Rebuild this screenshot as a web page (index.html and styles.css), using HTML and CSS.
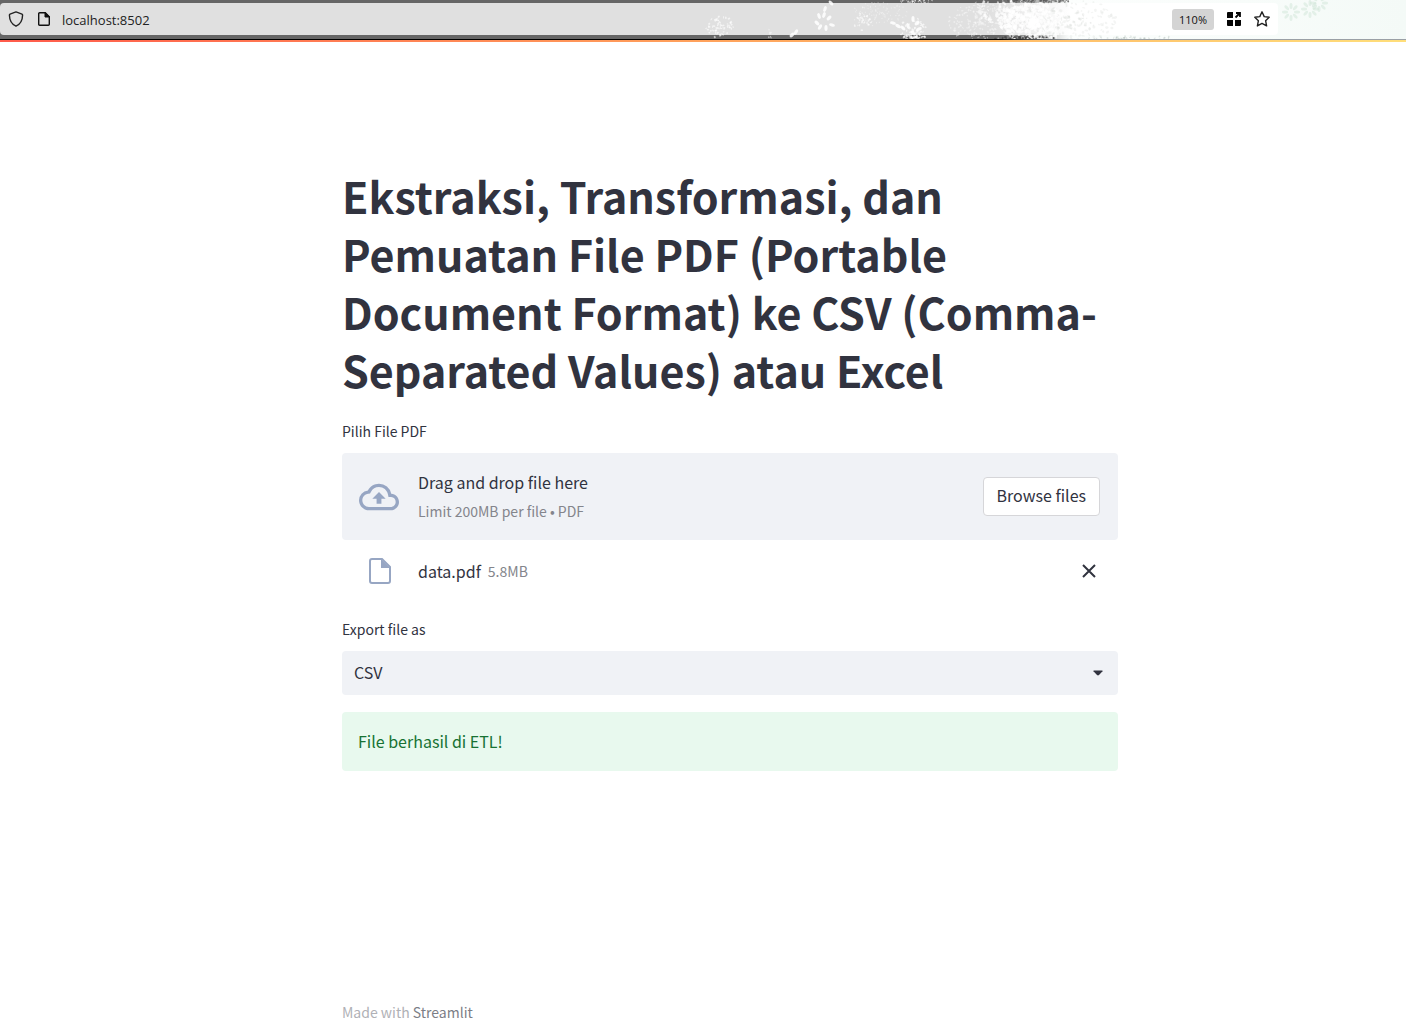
FILE: index.html
```html
<!DOCTYPE html>
<html lang="id">
<head>
<meta charset="utf-8">
<title>Ekstraksi, Transformasi, dan Pemuatan File PDF</title>
<link rel="stylesheet" href="styles.css">
</head>
<body>
<header class="toolbar">
  <form class="address">
    <svg class="icon" viewBox="0 0 16 16" aria-hidden="true"><path d="M8 .9 14 3.1q.6.3.6 1C14.500 9.500 12 13.500 8 15.200 4 13.500 1.500 9.500 1.400 4.100q0-.7.6-1z" fill="none" stroke="#222" stroke-width="1.400" stroke-linejoin="round"/></svg>
    <svg class="icon" viewBox="0 0 16 16" aria-hidden="true"><path d="M3.700 1.700h5.600l4 4v7.600q0 1-1 1H3.700q-1 0-1-1V2.700q0-1 1-1z" fill="none" stroke="#111" stroke-width="1.400"/><path d="M9 1.500V6h4.500z" fill="#111" stroke="#111"/></svg>
    <input class="url" type="text" aria-label="Alamat" value="localhost:8502">
    <button class="zoom" type="button">110%</button>
    <button class="tool" type="button" aria-label="Ekstensi"><svg class="icon" viewBox="0 0 16 16"><path d="M2 1h5v6H1V2q0-1 1-1zM1 9h6v6H2q-1 0-1-1zM9 9h6v5q0 1-1 1H9z" fill="#050505"/><path d="M10 2h4v4M14 2 9.500 6.500" fill="none" stroke="#050505" stroke-width="1.800"/></svg></button>
    <button class="tool" type="button" aria-label="Markah"><svg class="icon" viewBox="0 0 16 16"><path d="m8 .8 2.200 4.800 5 .6-3.600 3.500 1 5.200L8 12.400l-4.600 2.500 1-5.200L.8 6.200l5-.6z" fill="none" stroke="#222" stroke-width="1.400" stroke-linejoin="round"/></svg></button>
  </form>
  <svg class="snow" width="1406" height="40" aria-hidden="true"></svg>
</header>
<div class="decoration"></div>
<main class="page">
  <h1 class="title">Ekstraksi, Transformasi, dan Pemuatan File PDF (Portable Document Format) ke CSV (Comma-Separated Values) atau Excel</h1>
  <label class="label" for="browse">Pilih File PDF</label>
  <section class="dropzone">
    <svg class="cloud" viewBox="0 0 24 24" aria-hidden="true"><path d="M19.350 10.040A7.490 7.490 0 0 0 12 4C9.110 4 6.600 5.640 5.350 8.040A5.994 5.994 0 0 0 0 14c0 3.310 2.690 6 6 6h13c2.760 0 5-2.240 5-5 0-2.640-2.050-4.780-4.650-4.960zM19 18H6c-2.210 0-4-1.790-4-4 0-2.050 1.530-3.760 3.560-3.970l1.070-.11.5-.95A5.469 5.469 0 0 1 12 6c2.620 0 4.880 1.860 5.390 4.430l.3 1.500 1.530.11A2.980 2.980 0 0 1 22 15c0 1.650-1.350 3-3 3zM8 13h2.550v3h2.900v-3H16l-4-4z" fill="#97a6c3"/></svg>
    <div class="instructions"><span>Drag and drop file here</span><small class="hint">Limit 200MB per file • PDF</small></div>
    <button class="browse" id="browse" type="button">Browse files</button>
  </section>
  <div class="file">
    <svg class="doc" viewBox="0 0 22 26" aria-hidden="true"><path d="M3 1h10l8 8v14q0 2-2 2H3q-2 0-2-2V3q0-2 2-2z" fill="none" stroke="#97a6c3" stroke-width="2"/><path d="M12 1v9h9z" fill="#97a6c3"/></svg>
    <span>data.pdf</span><small class="size">5.8MB</small>
    <button class="remove" type="button" aria-label="Hapus data.pdf"><svg viewBox="0 0 14 14" width="14" height="14"><path d="m1 1 12 12M13 1 1 13" stroke="#31333f" stroke-width="2"/></svg></button>
  </div>
  <label class="label" for="format">Export file as</label>
  <div class="select-wrap">
    <select class="select" id="format"><option>CSV</option><option>Excel</option></select>
    <svg class="caret" viewBox="0 0 10 6" aria-hidden="true"><path d="M1 .5h8q1 0 .5.800L6 5Q5 5.800 4 5L.5 1.300Q0 .5 1 .5z" fill="#31333f"/></svg>
  </div>
  <p class="success" role="status">File berhasil di ETL!</p>
</main>
<footer class="footer">Made with <a class="credit" href="#">Streamlit</a></footer>
<script src="snow.js"></script>
</body>
</html>
```
FILE: styles.css
```css
* { box-sizing: border-box; }
body {
  margin: 0;
  min-height: 100vh;
  display: flex;
  flex-direction: column;
  background: #fff;
  color: #31333f;
  font: 16px/28px "Noto Sans CJK JP", "Noto Sans CJK SC", sans-serif;
}
button, input, select { font: inherit; color: inherit; }
.toolbar {
  position: relative;
  padding: 3px 128px 4px 0;
  border-bottom: 1px solid #000;
  background: linear-gradient(90deg, #666 1000px, #fcfefd 1070px, #f4faf7);
  border-image: linear-gradient(90deg, #000 1000px, #9aa0a6 1070px) 1;
  overflow: hidden;
}
.address {
  position: relative;
  display: flex;
  align-items: center;
  height: 32px;
  padding: 0 8px;
  border-radius: 4px;
  background: linear-gradient(90deg, #e0e0e0 990px, #fff 1070px);
}
.icon { display: block; width: 16px; height: 16px; flex: none; }
.address > .icon + .icon { margin-left: 12px; }
.url {
  flex: 1;
  min-width: 0;
  margin-left: 10px;
  padding: 2px 0 0;
  border: 0;
  background: none;
  color: #222;
  font: 13px/20px "Open Sans", sans-serif;
}
.zoom {
  height: 21px;
  margin-right: 12px;
  padding: 1px 7px 0;
  border: 0;
  border-radius: 3px;
  background: #d4d4d4;
  color: #111;
  font: 11px/20px "Open Sans", sans-serif;
}
.tool { padding: 0; border: 0; background: none; }
.tool + .tool { margin-left: 12px; }
.snow { position: absolute; top: 0; left: 0; pointer-events: none; }
.decoration { height: 2px; background: linear-gradient(90deg, #ff5b4b, #ffa25c 50%, #ffde7a); }
.page {
  width: 100%;
  max-width: 830px;
  margin: 0 auto;
  padding: 124px 0 0 54px;
  display: flex;
  flex-direction: column;
}
.title { margin: 0 0 19px; font-size: 43px; line-height: 58px; font-weight: 700; }
.label { margin-bottom: 8px; font-size: 14px; line-height: 28px; }
.dropzone {
  display: flex;
  align-items: center;
  height: 87px;
  padding: 0 18px 0 17px;
  border-radius: 4px;
  background: #f0f2f6;
}
.cloud { width: 40px; height: 40px; margin-right: 19px; }
.instructions { flex: 1; display: flex; flex-direction: column; gap: 1px; }
.hint, .size { color: #84858c; font-size: 14px; }
.browse {
  height: 39px;
  padding: 0 13px 3px;
  border: 1px solid #d6d6d9;
  border-radius: 4px;
  background: #fff;
}
.file { display: flex; align-items: center; height: 63px; margin-bottom: 12px; padding: 0 22px 2px 27px; }
.doc { width: 22px; height: 26px; margin-right: 27px; }
.size { margin-left: 7px; }
.remove { display: flex; margin-left: auto; padding: 0; border: 0; background: none; }
.select-wrap { display: grid; align-items: center; margin-bottom: 17px; }
.select {
  grid-area: 1 / 1;
  appearance: none;
  width: 100%;
  height: 44px;
  padding: 0 12px 2px;
  border: 0;
  border-radius: 4px;
  background: #f0f2f6;
}
.caret { grid-area: 1 / 1; justify-self: end; width: 10px; height: 6px; margin-right: 15px; pointer-events: none; }
.success { margin: 0; padding: 15px 16px 16px; border-radius: 4px; background: #e8f9ee; color: #177233; }
.footer {
  width: 100%;
  max-width: 830px;
  margin: auto auto 0;
  padding: 0 0 3px 54px;
  color: #b0b1b6;
  font-size: 14px;
}
.credit { color: #7c7e86; text-decoration: none; }
```
FILE: snow.js
```js
// Frost pattern of the toolbar theme, drawn from a seeded generator.
const snow = document.querySelector('.snow');
let seed = 7;
const rnd = () => (seed = (seed * 16807) % 2147483647) / 2147483647;
const leaf = (x, y, rx, ry, turn, fill, opacity) =>
  `<ellipse cx="${x}" cy="${y}" rx="${rx}" ry="${ry}" transform="rotate(${turn} ${x} ${y})" fill="${fill}" opacity="${opacity}"/>`;
let art = '';
// [centre x, centre y, spread x, spread y, count, largest speck, colour, opacity]
const drifts = [
  [720, 27, 14, 11, 60, 1, '#fff', .6], [770, 34, 3, 5, 6, 1, '#fff', .5],
  [862, 22, 9, 9, 26, 1, '#fff', .6],
  [880, 14, 30, 12, 100, 0, '#fff', .4], [913, 30, 14, 12, 50, 1, '#fff', .6],
  [914, 37, 11, 3, 45, 1, '#fff', .6], [915, 1, 20, 2, 45, 0, '#fff', .6],
  [980, 22, 32, 20, 170, 1, '#fff', .4], [1004, 10, 30, 14, 120, 2, '#fff', .6],
  [1034, 22, 34, 20, 420, 3, '#fff', .7], [1070, 20, 50, 21, 150, 2, '#c8cbca', .2],
  [1024, 38, 30, 2, 60, 1, '#444', .7], [1040, 1, 40, 2, 70, 1, '#555', .6],
  [1130, 38, 50, 2, 45, 1, '#aab5ae', .3]
];
for (const [x, y, w, h, n, size, fill, opacity] of drifts) {
  for (let i = 0; i < n; i++) {
    const angle = rnd() * Math.PI * 2, reach = Math.pow(rnd(), .75);
    art += leaf(x + Math.cos(angle) * reach * w, y + Math.sin(angle) * reach * h,
      .5 + rnd() * size / 2, .8 + rnd() * size * .7, rnd() * 180, fill, opacity);
  }
}
// [x, y, rotation] of the large petals
const petals = [
  [817, 23, -45], [819, 16, -20], [820, 27, 30], [826, 28, 0], [829, 18, 45], [832, 25, -75],
  [824, 15, 20], [825, 9, 20], [831, 3, -40], [792, 35, 45], [796, 32, 30],
  [893, 23, -75], [898, 26, -60], [903, 28, -40], [908, 26, -20], [913, 19, 0], [917, 23, 45], [919, 29, 70], [913, 33, -50]
];
for (const [x, y, r] of petals) art += leaf(x, y, 1.6, 3, r, '#fff', .85);
// Pale green blossoms at the far end of the bar
for (const [cx, cy] of [[1291, 12], [1310, 9], [1319, 3]])
  for (let t = 0; t < 360; t += 45)
    art += leaf(cx + Math.cos(t * Math.PI / 180) * 6, cy + Math.sin(t * Math.PI / 180) * 6, 1.5, 3, t + 90, '#cfe6d8', .5);
snow.innerHTML = art;
```
